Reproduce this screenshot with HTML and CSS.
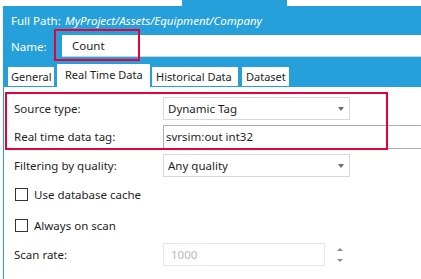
FILE: index.html
```html
<!DOCTYPE html>
<html lang="en">
<head>
    <meta charset="UTF-8">
    <title>Tag Properties</title>
    <link rel="stylesheet" href="styles.css">
</head>
<body>
    <div class="top-strip">
        <div class="top-tab"></div>
    </div>
    <div class="panel">
        <div class="header">
            <div class="path-row">
                <span class="path-label">Full Path:</span>
                <span class="path-value">MyProject/Assets/Equipment/Company</span>
            </div>
            <div class="name-row">
                <span class="name-label">Name:</span>
                <div class="name-input">
                    Count
                    <div class="highlight name-highlight"></div>
                </div>
            </div>
            <div class="tabs">
                <div class="tab tab-general">General</div>
                <div class="tab tab-active">Real Time Data</div>
                <div class="tab tab-historical">Historical Data</div>
                <div class="tab tab-dataset">Dataset</div>
            </div>
        </div>

        <div class="content">
            <div class="highlight source-highlight"></div>

            <div class="row row-source">
                <span class="label">Source type:</span>
                <div class="combo">
                    <span>Dynamic Tag</span>
                    <span class="arrow-down"></span>
                </div>
            </div>
            <div class="row row-tag">
                <span class="label">Real time data tag:</span>
                <div class="textbox">svrsim:out int32</div>
            </div>
            <div class="row row-filter">
                <span class="label">Filtering by quality:</span>
                <div class="combo">
                    <span>Any quality</span>
                    <span class="arrow-down"></span>
                </div>
            </div>
            <label class="row check-row check-cache">
                <span class="checkbox"></span>
                <span>Use database cache</span>
            </label>
            <label class="row check-row check-scan">
                <span class="checkbox"></span>
                <span>Always on scan</span>
            </label>
            <div class="row row-rate">
                <span class="label">Scan rate:</span>
                <div class="number-box">1000</div>
                <div class="spinner">
                    <span class="spin-up"></span>
                    <span class="spin-down"></span>
                </div>
            </div>
        </div>
    </div>
</body>
</html>
```

FILE: styles.css
```css
/* Base */
body {
    margin: 0;
    width: 421px;
    height: 279px;
    overflow: hidden;
    background: #ffffff;
    font-family: "Noto Sans", "Open Sans", sans-serif;
    font-size: 11.5px;
    color: #1e1e1e;
    white-space: nowrap;
}

/* Strip above the panel */
.top-strip {
    height: 6px;
    display: flex;
}

.top-tab {
    margin-left: 182px;
    width: 105px;
    background: #26a0da;
}

.panel {
    margin-left: 3px;
}

/* Blue header */
.header {
    background: #26a0da;
    color: #ffffff;
}

.path-row {
    height: 29px;
    display: flex;
    align-items: center;
    padding-left: 8px;
}

.path-label {
    width: 54px;
}

.path-value {
    font-style: italic;
}

.name-row {
    height: 22px;
    display: flex;
    align-items: center;
    padding-left: 8px;
}

.name-label {
    width: 51px;
}

.name-input {
    position: relative;
    flex: 1;
    height: 22px;
    box-sizing: border-box;
    background: #ffffff;
    border-bottom: 1px solid #c9d3da;
    color: #1e1e1e;
    padding-left: 10px;
    line-height: 21px;
}

/* Red annotation frames */
.highlight {
    position: absolute;
    border: 2px solid #e8003b;
    box-sizing: border-box;
}

.name-highlight {
    left: -8px;
    top: -6px;
    width: 86px;
    height: 32px;
}

.source-highlight {
    left: 1px;
    top: 5px;
    width: 383px;
    height: 58px;
}

/* Tabs */
.tabs {
    display: flex;
    align-items: flex-end;
    height: 30px;
    padding-left: 5px;
}

.tab {
    height: 19px;
    margin-bottom: 1px;
    box-sizing: border-box;
    background: #ffffff;
    color: #1e1e1e;
    font-size: 11px;
    padding-left: 4px;
    line-height: 19px;
    overflow: hidden;
}

.tab-general {
    width: 46px;
    padding-left: 3px;
}

.tab-active {
    width: 93px;
    height: 23px;
    margin-bottom: 0;
    margin-left: 3px;
    padding-left: 8px;
    line-height: 21px;
}

.tab-historical {
    width: 86px;
    margin-left: 2px;
}

.tab-dataset {
    width: 47px;
    margin-left: 4px;
}

/* Content area */
.content {
    position: relative;
    height: 192px;
    border-left: 1px solid #26a0da;
    padding: 10px 0 0 10px;
    box-sizing: border-box;
}

.row {
    display: flex;
    align-items: center;
    height: 23px;
}

.label {
    width: 149px;
}

.row-source {
    margin-bottom: 5px;
}

.row-tag {
    margin-bottom: 6px;
}

.row-filter {
    margin-bottom: 6px;
}

.check-cache {
    margin-bottom: 8px;
}

.check-scan {
    margin-bottom: 6px;
}

.combo {
    width: 187px;
    height: 23px;
    box-sizing: border-box;
    border: 1px solid #d9d9d9;
    display: flex;
    align-items: center;
    justify-content: space-between;
    padding: 0 5px 0 4px;
}

.arrow-down {
    width: 0;
    height: 0;
    border-left: 3px solid transparent;
    border-right: 3px solid transparent;
    border-top: 4px solid #6d6d6d;
}

.textbox {
    flex: 1;
    height: 24px;
    box-sizing: border-box;
    border: 1px solid #abadb3;
    border-right: none;
    padding-left: 2px;
    line-height: 21px;
}

.check-row {
    padding-left: 1px;
}

.checkbox {
    width: 13px;
    height: 13px;
    box-sizing: border-box;
    border: 1px solid #333333;
    margin-right: 6px;
}

.number-box {
    width: 162px;
    height: 23px;
    box-sizing: border-box;
    border: 1px solid #e8e8e8;
    color: #b8b8b8;
    padding-left: 7px;
    line-height: 21px;
}

.spinner {
    display: flex;
    flex-direction: column;
    justify-content: space-between;
    height: 14px;
    margin-left: 12px;
}

.spin-up,
.spin-down {
    width: 0;
    height: 0;
    border-left: 3px solid transparent;
    border-right: 3px solid transparent;
}

.spin-up {
    border-bottom: 3px solid #8a8a8a;
}

.spin-down {
    border-top: 3px solid #8a8a8a;
}
```
